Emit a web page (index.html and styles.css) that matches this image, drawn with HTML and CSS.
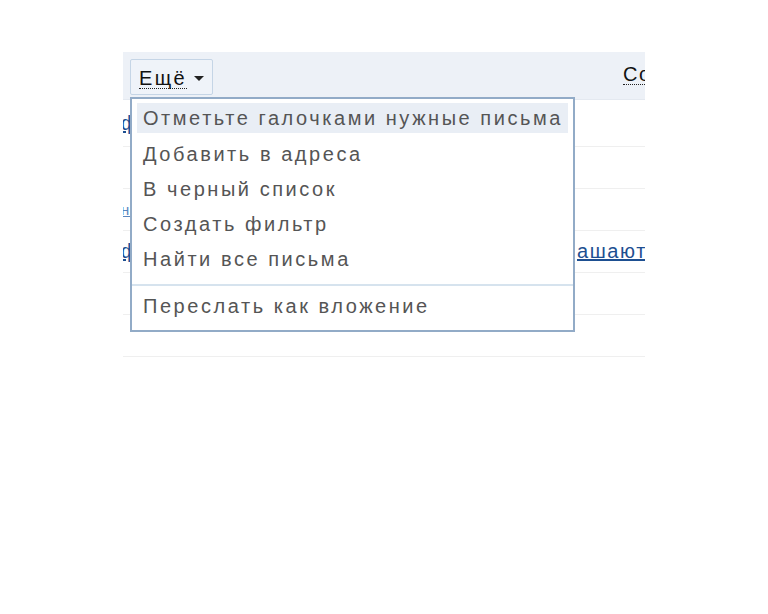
FILE: index.html
```html
<!DOCTYPE html>
<html lang="ru">
<head>
<meta charset="utf-8">
<link rel="stylesheet" href="styles.css">
</head>
<body>
<div class="page">
  <div class="frame">
    <div class="toolbar">
      <button class="more"><span class="more-label">Ещё</span><span class="caret"></span></button>
      <span class="right-action">Создать</span>
    </div>
    <div class="rows">
      <div class="row first"><a class="lnk" href="#">ф</a></div>
      <div class="row"></div>
      <div class="row"><span class="lnk small">н</span></div>
      <div class="row"><a class="lnk" href="#">ф</a><a class="lnk right" href="#">ашают</a></div>
      <div class="row"></div>
      <div class="row"></div>
    </div>
    <div class="menu">
      <div class="item active">Отметьте галочками нужные письма</div>
      <div class="item">Добавить в адреса</div>
      <div class="item">В черный список</div>
      <div class="item">Создать фильтр</div>
      <div class="item">Найти все письма</div>
      <div class="sep"></div>
      <div class="item">Переслать как вложение</div>
    </div>
  </div>
</div>
</body>
</html>
```
FILE: styles.css
```css
html, body {
  margin: 0;
  padding: 0;
  background: #ffffff;
}
body {
  font-family: "Liberation Sans", Arial, sans-serif;
}
.page {
  padding: 52px 0 0 123px;
}
.frame {
  position: relative;
  width: 522px;
  height: 310px;
  overflow: hidden;
}
.toolbar {
  height: 48px;
  background: #edf1f7;
  display: flex;
  align-items: flex-start;
  justify-content: space-between;
  box-sizing: border-box;
  border-bottom: 1px solid #e4e9f0;
}
.more {
  margin: 7px 0 0 7px;
  height: 36px;
  width: 83px;
  box-sizing: border-box;
  border: 1px solid #c5d5e6;
  border-radius: 2px;
  background: #eff3f9;
  display: flex;
  align-items: center;
  padding: 0 0 0 8px;
  font-family: "Liberation Sans", Arial, sans-serif;
  font-size: 20px;
  color: #111;
}
.more-label {
  border-bottom: 1px dotted #222;
  line-height: 20px;
  margin-top: 2px;
  letter-spacing: 2.4px;
}
.caret {
  margin-left: 7px;
  margin-top: 2px;
  width: 0;
  height: 0;
  border-left: 5px solid transparent;
  border-right: 5px solid transparent;
  border-top: 5px solid #222;
}
.right-action {
  margin: 12px -44px 0 0;
  font-size: 20px;
  color: #111;
  letter-spacing: 1.6px;
  line-height: 20px;
  border-bottom: 1px dotted #222;
  width: 66px;
  white-space: nowrap;
}
.rows {
  display: flex;
  flex-direction: column;
}
.row {
  height: 42px;
  border-bottom: 1px solid #efefef;
  box-sizing: border-box;
  position: relative;
  display: flex;
  align-items: center;
  justify-content: space-between;
}
.row.first {
  height: 47px;
}
.lnk {
  margin-left: -2px;
  font-size: 20px;
  color: #1d4f91;
  text-decoration: underline;
  letter-spacing: 1.6px;
}
.lnk.small {
  font-size: 15px;
  color: #5b86bf;
}
.lnk.right {
  margin-left: 0;
  margin-right: -2px;
  color: #1d4f91;
}
.menu {
  position: absolute;
  left: 7px;
  top: 45px;
  width: 445px;
  box-sizing: border-box;
  border: 2px solid #92abc7;
  background: #ffffff;
  padding: 4px 0 6px;
}
.item {
  margin: 0 5px;
  padding-left: 6px;
  height: 35px;
  line-height: 35px;
  font-size: 20px;
  letter-spacing: 2.55px;
  color: #555555;
  white-space: nowrap;
}
.item.active {
  height: 30px;
  line-height: 30px;
  margin-bottom: 4px;
  background: #e9eef5;
}
.sep {
  height: 2px;
  background: #d6e3ee;
  margin: 7px 0 3px;
}
```
